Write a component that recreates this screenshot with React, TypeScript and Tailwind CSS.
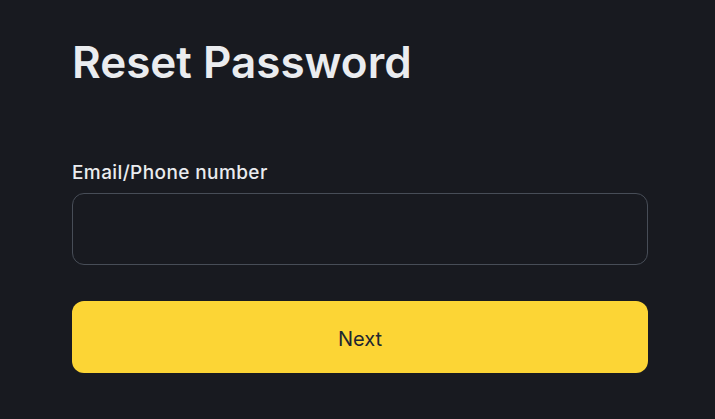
import React, { useState } from 'react';

export default function App() {
  const [value, setValue] = useState('');

  return (
    <div className="min-h-screen w-full bg-[#181a20] px-[72px] pt-[34px] font-['Inter',sans-serif]">
      <div className="w-[576px]">
        <h1 className="text-[44px] font-semibold leading-[56px] text-[#eaecef]">
          Reset Password
        </h1>
        <div className="mt-[71px]">
          <label className="block text-[19px] font-medium leading-[24px] tracking-[0.4px] text-[#eaecef]">
            Email/Phone number
          </label>
          <input
            value={value}
            onChange={(e) => setValue(e.target.value)}
            className="mt-[8px] block h-[72px] w-full rounded-[12px] border border-[#474d57] bg-transparent px-4 text-[18px] text-[#eaecef] outline-none"
          />
        </div>
        <button className="mt-[36px] flex h-[72px] w-full items-center justify-center rounded-[12px] bg-[#fcd535] pt-[3px] text-[20px] font-normal text-[#202630]">
          Next
        </button>
      </div>
    </div>
  );
}
